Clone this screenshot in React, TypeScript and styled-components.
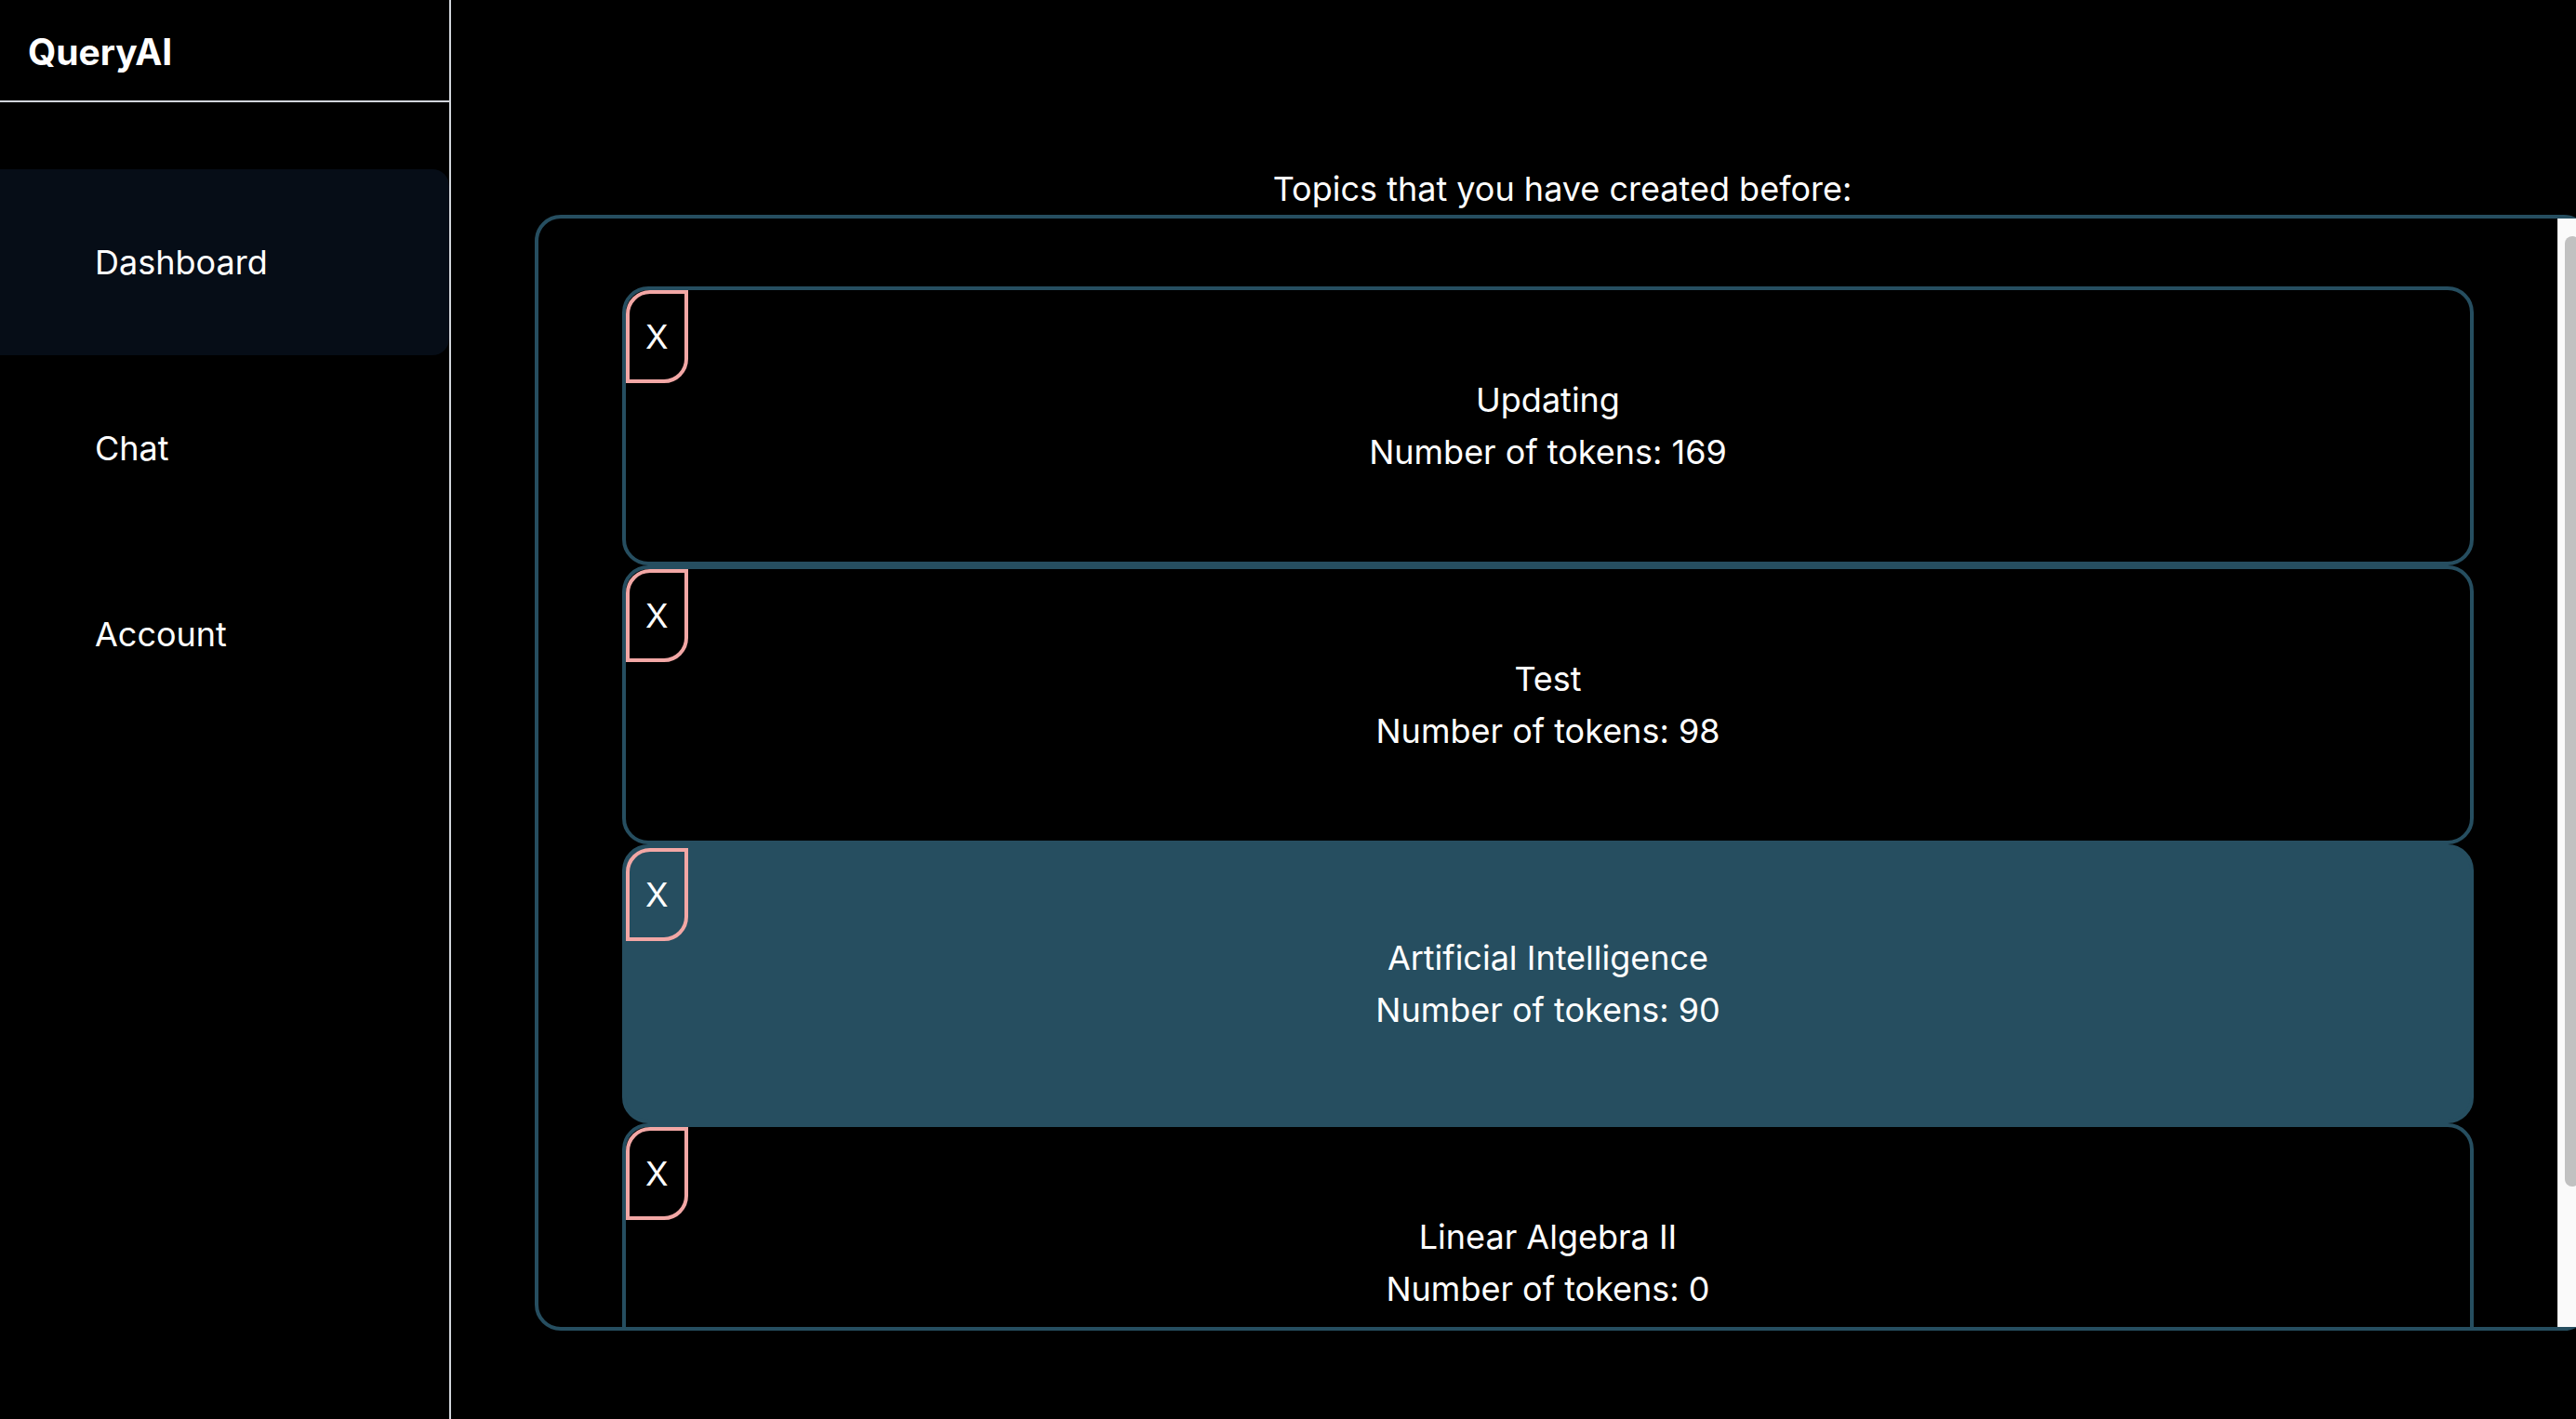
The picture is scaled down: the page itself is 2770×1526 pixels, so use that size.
import React, { useLayoutEffect, useRef, useState } from "react";
import styled, { createGlobalStyle } from "styled-components";

const colors = {
  page: "#000000",
  text: "#ffffff",
  divider: "#d1d5db",
  navActive: "#060d17",
  accent: "#264e60",
  danger: "#f2a7a5",
  track: "#fafafa",
  trackEdge: "#e8e8e8",
  thumb: "#c1c1c1",
};

const GlobalStyle = createGlobalStyle`
  *, *::before, *::after {
    box-sizing: border-box;
  }

  body {
    margin: 0;
    overflow: hidden;
    background: ${colors.page};
    color: ${colors.text};
    font-family: Inter, "Liberation Sans", sans-serif;
    font-size: 36px;
    line-height: 56px;
  }

  h1, h2, p, ul {
    margin: 0;
    padding: 0;
    font-size: inherit;
    font-weight: inherit;
  }

  ul {
    list-style: none;
  }
`;

const Layout = styled.div`
  display: flex;
  height: 100vh;
`;

const Sidebar = styled.aside`
  flex: 0 0 485px;
  border-right: 2px solid ${colors.divider};
`;

const Brand = styled.header`
  padding: 28px 30px 24px;
  border-bottom: 2px solid ${colors.divider};
  font-size: 39px;
  font-weight: 700;
`;

const NavList = styled.ul`
  padding-top: 72px;
`;

const NavLink = styled.a<{ $active: boolean }>`
  display: block;
  padding: 72px 102px;
  border-radius: 0 18px 18px 0;
  background: ${({ $active }) => ($active ? colors.navActive : "transparent")};
  color: inherit;
  text-decoration: none;
`;

const Main = styled.main`
  flex: 1;
  min-width: 0;
  display: flex;
  flex-direction: column;
  margin-right: -15px;
  padding: 175px 0 95px 90px;
`;

const Heading = styled.h2`
  text-align: center;
`;

const Panel = styled.section`
  flex: 1;
  min-height: 0;
  display: flex;
  border: 4px solid ${colors.accent};
  border-radius: 28px;
`;

const TopicList = styled.ul`
  flex: 1;
  padding: 73px 90px;
  overflow-y: auto;
  scrollbar-width: none;
`;

const TopicCard = styled.li<{ $selected: boolean }>`
  display: grid;
  height: 300px;
  border: 4px solid ${colors.accent};
  border-radius: 28px;
  background: ${({ $selected }) => ($selected ? colors.accent : "transparent")};
`;

const TopicText = styled.div`
  grid-area: 1 / 1;
  place-self: center;
  text-align: center;
`;

const DeleteButton = styled.button`
  grid-area: 1 / 1;
  place-self: start;
  padding: 18px 17px;
  border: 4px solid ${colors.danger};
  border-radius: 26px 0;
  background: transparent;
  color: inherit;
  font: inherit;
  cursor: pointer;
`;

const ScrollTrack = styled.div`
  flex: 0 0 31px;
  padding: 19px 7px;
  border-left: 1px solid ${colors.trackEdge};
  background: ${colors.track};
`;

const ScrollThumb = styled.div`
  border-radius: 8px;
  background: ${colors.thumb};
`;

const navItems = ["Dashboard", "Chat", "Account"];

const initialTopics = [
  { name: "Updating", tokens: 169 },
  { name: "Test", tokens: 98 },
  { name: "Artificial Intelligence", tokens: 90 },
  { name: "Linear Algebra II", tokens: 0 },
];

export default function App() {
  const [topics, setTopics] = useState(initialTopics);
  const [visibleShare, setVisibleShare] = useState(1);
  const listRef = useRef<HTMLUListElement>(null);

  // The thumb is as long as the share of the list that is in view.
  useLayoutEffect(() => {
    const measure = () => {
      const list = listRef.current;
      if (list) setVisibleShare(list.clientHeight / list.scrollHeight);
    };
    measure();
    window.addEventListener("resize", measure);
    return () => window.removeEventListener("resize", measure);
  }, [topics]);

  const removeTopic = (name: string) =>
    setTopics((current) => current.filter((topic) => topic.name !== name));

  return (
    <>
      <GlobalStyle />
      <Layout>
        <Sidebar>
          <Brand>
            <h1>QueryAI</h1>
          </Brand>
          <nav>
            <NavList>
              {navItems.map((item) => (
                <li key={item}>
                  <NavLink href={`#${item.toLowerCase()}`} $active={item === "Dashboard"}>
                    {item}
                  </NavLink>
                </li>
              ))}
            </NavList>
          </nav>
        </Sidebar>
        <Main>
          <Heading>Topics that you have created before:</Heading>
          <Panel>
            <TopicList ref={listRef}>
              {topics.map(({ name, tokens }) => (
                <TopicCard key={name} $selected={name === "Artificial Intelligence"}>
                  <TopicText>
                    <p>{name}</p>
                    <p>Number of tokens: {tokens}</p>
                  </TopicText>
                  <DeleteButton type="button" onClick={() => removeTopic(name)}>
                    X
                  </DeleteButton>
                </TopicCard>
              ))}
            </TopicList>
            <ScrollTrack aria-hidden="true">
              <ScrollThumb style={{ height: `${visibleShare * 100}%` }} />
            </ScrollTrack>
          </Panel>
        </Main>
      </Layout>
    </>
  );
}
